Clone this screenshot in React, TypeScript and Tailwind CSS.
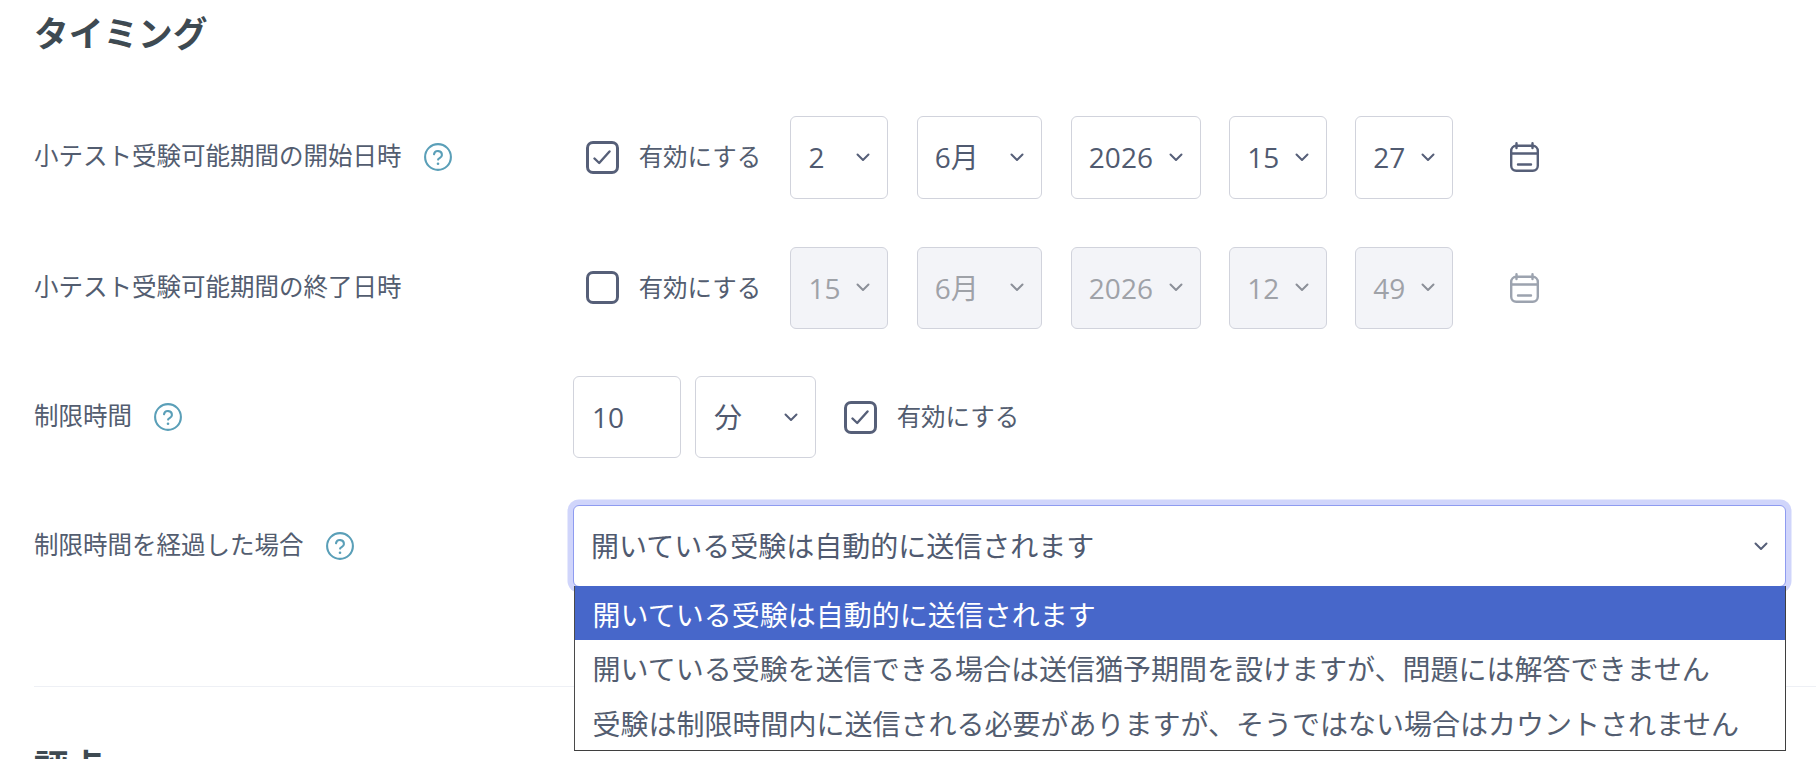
import React from 'react';

const fontStack = { fontFamily: '"Open Sans", "Noto Sans CJK JP", sans-serif' };

const Chevron: React.FC = () => (
  <svg viewBox="0 0 14 9" className="w-[14px] h-[9px] shrink-0" fill="none" stroke="currentColor" strokeWidth="2" strokeLinecap="round" strokeLinejoin="round">
    <path d="M1.5 1.5 7 7l5.5-5.5" />
  </svg>
);

const HelpIcon: React.FC = () => (
  <svg viewBox="0 0 28 28" className="w-[28px] h-[28px] shrink-0 text-[#5a9fb8]" fill="none" stroke="currentColor" strokeWidth="2.1" strokeLinecap="round">
    <circle cx="14" cy="14" r="12.9" />
    <path d="M10 11.2a4 4 0 0 1 7.9 1c0 2.6-3.8 3.4-3.8 4.4" />
    <path d="M14 20.8h.01" strokeWidth="2.6" />
  </svg>
);

const CalendarIcon: React.FC<{ disabled?: boolean }> = ({ disabled }) => (
  <svg viewBox="0 0 29 30" className={`w-[29px] h-[30px] shrink-0 ${disabled ? 'text-[#9ca3af]' : 'text-[#565f78]'}`} fill="none" stroke="currentColor" strokeWidth="2.4" strokeLinecap="round">
    <rect x="1.2" y="3.8" width="26.6" height="25" rx="5" />
    <path d="M1.2 11.5h26.6M6.5 1.2V6M22.5 1.2V6M8 22.5h13" />
  </svg>
);

const Checkbox: React.FC<{ checked?: boolean }> = ({ checked }) => (
  <span className="w-[33px] h-[33px] shrink-0 rounded-[7px] border-[3px] border-[#565f78] text-[#565f78] flex items-center justify-center">
    {checked && (
      <svg viewBox="0 0 18 15" className="w-[18px] h-[15px]" fill="none" stroke="currentColor" strokeWidth="2.4" strokeLinecap="round" strokeLinejoin="round">
        <path d="M1.5 8.5 6.2 13 16.5 1.5" />
      </svg>
    )}
  </span>
);

const Enable: React.FC<{ checked?: boolean }> = ({ checked }) => (
  <div className="flex items-center gap-[20px] w-[204.8px] shrink-0">
    <Checkbox checked={checked} />
    <span className="text-[24.45px] leading-none text-[#535d70]">有効にする</span>
  </div>
);

const Sel: React.FC<{ value: string; width: string; disabled?: boolean }> = ({ value, width, disabled }) => (
  <div className={`${width} h-full shrink-0 rounded-[6px] border border-[#d1d3dc] pl-[17px] pr-[17px] flex items-center justify-between text-[28px] ${disabled ? 'bg-[#f3f4f8] text-[#9fa2a8]' : 'bg-white text-[#505a70]'}`}>
    <span>{value}</span>
    <span className={disabled ? 'text-[#8b8f99]' : 'text-[#565f78]'}><Chevron /></span>
  </div>
);

const Label: React.FC<{ text: string; help?: boolean }> = ({ text, help }) => (
  <div className="w-[539px] shrink-0 flex items-center gap-[22px] text-[24.5px] text-[#535d70]">
    <span className="pb-[2px]">{text}</span>
    {help && <HelpIcon />}
  </div>
);

const DateRow: React.FC<{ label: string; help?: boolean; checked?: boolean; disabled?: boolean; values: string[]; className: string }> = ({ label, help, checked, disabled, values, className }) => (
  <div className={`flex items-center ${className}`}>
    <Label text={label} help={help} />
    <div className="pl-[12.7px]"><Enable checked={checked} /></div>
    <div className="flex items-stretch gap-[28.7px] h-full">
      <Sel value={values[0]} width="w-[97.5px]" disabled={disabled} />
      <Sel value={values[1]} width="w-[125.5px]" disabled={disabled} />
      <Sel value={values[2]} width="w-[129.7px]" disabled={disabled} />
      <Sel value={values[3]} width="w-[97.4px]" disabled={disabled} />
      <Sel value={values[4]} width="w-[97.4px]" disabled={disabled} />
    </div>
    <div className="pl-[57px]"><CalendarIcon disabled={disabled} /></div>
  </div>
);

const options = [
  '開いている受験は自動的に送信されます',
  '開いている受験を送信できる場合は送信猶予期間を設けますが、問題には解答できません',
  '受験は制限時間内に送信される必要がありますが、そうではない場合はカウントされません',
];

export default function App() {
  return (
    <div className="h-screen overflow-hidden bg-white pl-[34px] pr-[30.5px]" style={fontStack}>
      <h3 className="text-[34.7px] font-bold leading-[68px] text-[#3e4a52]">タイミング</h3>

      <div className="mt-[48px]">
        <DateRow className="h-[82.7px]" label="小テスト受験可能期間の開始日時" help checked values={['2', '6月', '2026', '15', '27']} />
        <DateRow className="h-[81.6px] mt-[48.5px]" label="小テスト受験可能期間の終了日時" disabled values={['15', '6月', '2026', '12', '49']} />

        <div className="flex items-center h-[81.5px] mt-[47.6px]">
          <Label text="制限時間" help />
          <div className="w-[107.5px] h-full shrink-0 rounded-[6px] border border-[#d1d3dc] pl-[18px] flex items-center text-[28px] text-[#505a70]">10</div>
          <div className="ml-[14.5px] h-full"><Sel value="分" width="w-[121px] pl-[18px]" /></div>
          <div className="ml-[27.7px]"><Enable checked /></div>
        </div>

        <div className="flex items-center h-[81.5px] mt-[47.4px]">
          <Label text="制限時間を経過した場合" help />
          <div className="relative flex-1 h-full rounded-[6px] border border-[#8e9bf0] ring-[5.5px] ring-[#d0d5fb] bg-white pl-[17px] pr-[17px] flex items-center justify-between text-[28px] text-[#505a70]">
            <span>{options[0]}</span>
            <span className="text-[#565f78]"><Chevron /></span>
            <div className="absolute left-0 -right-[1.5px] top-full border-l border-r-[1.5px] border-b-[1.5px] border-l-[#4a4a4a] border-r-[#3f3f3f] border-b-[#3f3f3f] bg-white z-10">
              {options.map((o, i) => (
                <div key={o} className={`h-[54.7px] pl-[17.5px] pt-[3px] flex items-center text-[28px] whitespace-nowrap ${i === 0 ? 'bg-[#4767ca] text-white' : 'text-[#535d70]'}`}>{o}</div>
              ))}
            </div>
          </div>
        </div>
      </div>

      <div className="mt-[99.5px] -mr-[30.5px] border-t border-[#eef0f5]" />
      <h3 className="mt-[46px] text-[34.7px] font-bold leading-[68px] text-[#3e4a52]">評点</h3>
    </div>
  );
}
